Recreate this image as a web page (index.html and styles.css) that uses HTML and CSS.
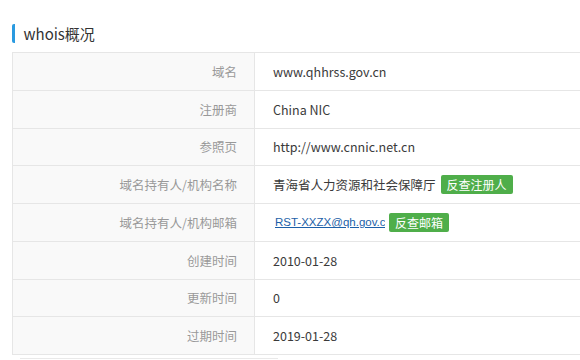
FILE: index.html
```html
<!DOCTYPE html>
<html>
<head>
<meta charset="utf-8">
<link rel="stylesheet" href="styles.css">
</head>
<body>
<div class="section">
  <h2 class="title">whois概况</h2>
  <div class="table">
    <div class="row"><div class="label">域名</div><div class="value">www.qhhrss.gov.cn</div></div>
    <div class="row"><div class="label">注册商</div><div class="value">China NIC</div></div>
    <div class="row"><div class="label">参照页</div><div class="value">http://www.cnnic.net.cn</div></div>
    <div class="row"><div class="label">域名持有人/机构名称</div><div class="value">青海省人力资源和社会保障厅<a class="btn">反查注册人</a></div></div>
    <div class="row"><div class="label">域名持有人/机构邮箱</div><div class="value"><span class="mail"><a href="#">RST-XXZX@qh.gov.cn</a></span><a class="btn">反查邮箱</a></div></div>
    <div class="row"><div class="label">创建时间</div><div class="value">2010-01-28</div></div>
    <div class="row"><div class="label">更新时间</div><div class="value">0</div></div>
    <div class="row"><div class="label">过期时间</div><div class="value">2019-01-28</div></div>
  </div>
  <div class="next"></div>
</div>
</body>
</html>
```
FILE: styles.css
```css
html, body {
  margin: 0;
  padding: 0;
  background: #fff;
  font-family: "Noto Sans CJK SC", "Noto Sans", sans-serif;
  overflow: hidden;
}
.section {
  padding: 24px 0 0 12px;
}
.title {
  margin: 0;
  height: 19px;
  line-height: 19px;
  font-size: 15px;
  font-weight: normal;
  color: #333;
  border-left: 3.5px solid #2a9ae0;
  border-radius: 2px;
  padding-left: 8.5px;
}
.table {
  margin-top: 9px;
  width: 600px;
  border-top: 1px solid #e6e6e6;
  border-left: 1px solid #e6e6e6;
}
.row {
  display: grid;
  grid-template-columns: 242px 1fr;
  height: 36.75px;
  border-bottom: 1px solid #e6e6e6;
}
.label {
  background: #f9f9f9;
  border-right: 1px solid #e6e6e6;
  padding-right: 17px;
  color: #999;
  font-size: 12.5px;
  display: flex;
  align-items: center;
  justify-content: flex-end;
}
.value {
  padding-left: 18px;
  color: #3a3a3a;
  font-size: 12.5px;
  display: flex;
  align-items: center;
}
.btn {
  display: inline-block;
  background: #4fae4a;
  color: #fff;
  font-size: 12px;
  height: 19px;
  line-height: 19px;
  padding: 0 6px;
  border-radius: 2px;
  margin-left: 5px;
}
.mail {
  display: inline-block;
  width: 110px;
  margin-left: 2px;
  overflow: hidden;
  white-space: nowrap;
  font-family: "Liberation Sans", Arial, sans-serif;
  font-size: 11.5px;
}
.mail a {
  color: #1c5fa8;
  text-decoration: underline;
}
.mail + .btn {
  margin-left: 4px;
}
.next {
  margin: 3px 0 0 8px;
  width: 258px;
  border-top: 1px solid #e9e9e9;
}
```
